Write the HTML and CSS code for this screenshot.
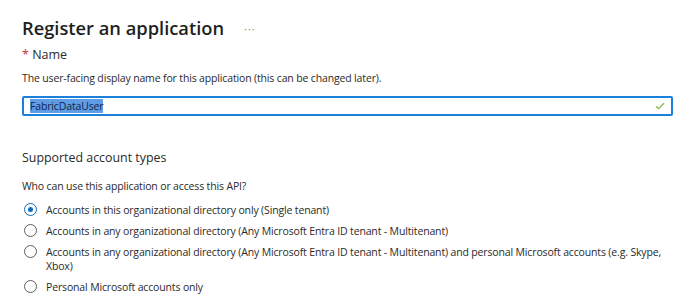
FILE: index.html
```html
<!DOCTYPE html>
<html lang="en">
<head>
  <meta charset="UTF-8" />
  <title>Register an application</title>
  <link rel="stylesheet" href="styles.css">
</head>
<body>
  <div class="page">
    <div class="header">
      <h1>Register an application</h1>
      <span class="more">&middot;&middot;&middot;</span>
    </div>

    <div class="field">
      <label class="field-label"><span class="req">*</span> Name</label>
      <p class="hint">The user-facing display name for this application (this can be changed later).</p>
      <div class="input">
        <span class="selected">FabricDataUser</span>
        <svg class="check" width="10" height="8" viewBox="0 0 10 8">
          <path d="M1 4.2 L3.6 6.6 L9 1.2" fill="none" stroke="#7fba4a" stroke-width="1.3" />
        </svg>
      </div>
    </div>

    <h2>Supported account types</h2>
    <p class="hint question">Who can use this application or access this API?</p>

    <div class="options">
      <div class="option">
        <span class="radio checked"></span>
        <span>Accounts in this organizational directory only (Single tenant)</span>
      </div>
      <div class="option">
        <span class="radio"></span>
        <span>Accounts in any organizational directory (Any Microsoft Entra ID tenant - Multitenant)</span>
      </div>
      <div class="option">
        <span class="radio"></span>
        <span>Accounts in any organizational directory (Any Microsoft Entra ID tenant - Multitenant) and personal Microsoft accounts (e.g. Skype, Xbox)</span>
      </div>
      <div class="option">
        <span class="radio"></span>
        <span>Personal Microsoft accounts only</span>
      </div>
    </div>
  </div>
</body>
</html>
```

FILE: styles.css
```css
body {
  margin: 0;
  background: #fff;
  font-family: 'Open Sans', sans-serif;
  color: #2b2a29;
  font-size: 10.5px;
  letter-spacing: -0.15px;
}
.page {
  padding: 13px 15px 0 22px;
}
.header {
  display: flex;
  align-items: center;
  gap: 20px;
}
h1 {
  margin: 0;
  font-size: 18.3px;
  font-weight: 600;
  color: #201f1e;
  line-height: 30px;
  letter-spacing: 0;
}
.more {
  color: #8a8886;
  font-size: 11px;
  letter-spacing: 1px;
}
.field-label {
  display: block;
  margin-top: 3px;
  font-size: 12.5px;
  line-height: 18px;
  letter-spacing: 0;
}
.req {
  color: #c4314b;
}
.hint {
  margin: 6px 0 0;
  line-height: 16px;
}
.input {
  display: flex;
  align-items: center;
  justify-content: space-between;
  height: 16px;
  margin-top: 10px;
  border: 2px solid #1b7fdc;
  border-radius: 2px;
  padding: 0 6px 0 6px;
}
.selected {
  background: #5e9de6;
  color: #14244a;
  line-height: 14px;
}
h2 {
  margin: 33px 0 0;
  font-size: 12.4px;
  font-weight: 400;
  line-height: 18px;
  letter-spacing: 0;
}
.question {
  margin-top: 11px;
}
.options {
  display: flex;
  flex-direction: column;
  gap: 7px;
  margin-top: 9px;
}
.option {
  display: flex;
  align-items: flex-start;
  gap: 9px;
  line-height: 14px;
}
.radio {
  flex: none;
  width: 11px;
  height: 11px;
  margin: 0 0 0 2px;
  border: 1px solid #605e5c;
  border-radius: 50%;
  position: relative;
}
.radio.checked {
  border-color: #0f6cbd;
}
.radio.checked::after {
  content: "";
  position: absolute;
  left: 3px;
  top: 3px;
  width: 5px;
  height: 5px;
  border-radius: 50%;
  background: #0f6cbd;
}
```
